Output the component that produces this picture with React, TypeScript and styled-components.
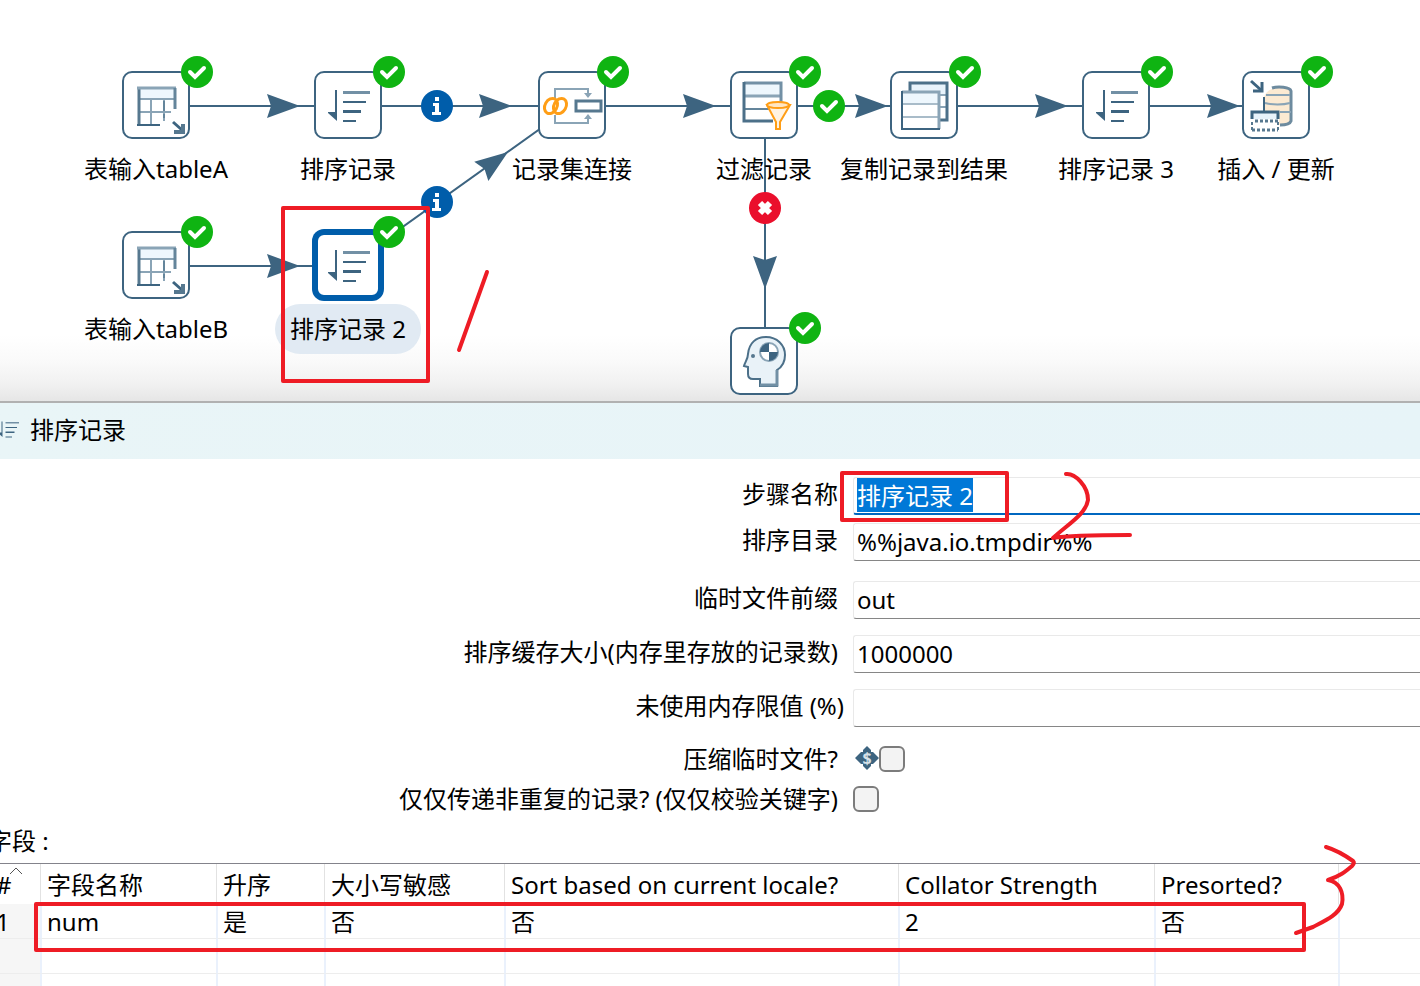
import React, { useEffect, useRef } from "react";
import styled, { createGlobalStyle, css } from "styled-components";

const INK = "#3d6480";
const SOFT = "#8aa4b6";
const ORANGE = "#ff9e16";
const MARK = "#ee1c25";

const GlobalStyle = createGlobalStyle`
  *, *::before, *::after { box-sizing: border-box; }
  body {
    margin: 0;
    background: #fff;
    color: #000;
    font-family: "Noto Sans", "Noto Sans CJK SC", sans-serif;
    font-size: 24px;
  }
  input { font: inherit; color: inherit; }
`;

const Page = styled.div`
  position: relative;
  display: flex;
  flex-direction: column;
  height: 100vh;
  overflow: hidden;
`;

/* ---------- Transformation canvas ---------- */

const Canvas = styled.main`
  position: relative;
  flex: 0 0 403px;
  overflow: hidden;
  border-bottom: 2px solid #b1b1b1;
  background: linear-gradient(#fff 335px, #fafafa 360px, #f1f1f1 384px, #e6e6e6 401px);
`;

const Hops = styled.svg`
  position: absolute;
  inset: 0;
  width: 100%;
  height: 100%;
`;

const Step = styled.div<{ $x: number; $y: number }>`
  position: absolute;
  left: ${(p) => p.$x}px;
  top: ${(p) => p.$y}px;
  width: 68px;
  display: flex;
  flex-direction: column;
  align-items: center;
`;

const StepBox = styled.div<{ $selected?: boolean }>`
  width: 68px;
  height: 68px;
  border: 2px solid ${INK};
  border-radius: 10px;
  background: #fff;
  ${(p) =>
    p.$selected &&
    css`
      border: 4px solid #005daa;
      box-shadow: 0 0 0 2px #005daa;
    `}
`;

const StepGlyph = styled.svg`
  position: absolute;
  top: 0;
  left: 0;
  width: 68px;
  height: 68px;
`;

const StepBadge = styled.svg`
  position: absolute;
  top: -15px;
  left: 59px;
  width: 32px;
  height: 32px;
`;

const StepLabel = styled.span<{ $selected?: boolean }>`
  margin-top: 5px;
  padding: 0 15px;
  border-radius: 25px;
  line-height: 50px;
  white-space: nowrap;
  background: ${(p) => (p.$selected ? "#e1eaf3" : "transparent")};
`;

type GlyphName = "table" | "sort" | "join" | "filter" | "copy" | "upsert" | "head";

const SortShape = () => (
  <g fill={INK}>
    <path d="M21 19h2v31l-9-8v-1h7z" />
    <path d="M29 20h27v3H29z" fill="#7290a5" />
    <path d="M29 30h23v2H29z" />
    <path d="M29 39h18v3H29z" />
    <path d="M29 49h13v2H29z" />
  </g>
);

const glyphs: Record<GlyphName, React.ReactNode> = {
  table: (
    <g fill="none" strokeWidth="2">
      <path d="M16 17h37v11H16z" fill="#eef7fd" />
      <path d="M29 28v26M42 28v22M16 41h33M16 28h37" stroke={SOFT} />
      <path d="M42 30v10M42 43v4" stroke="#64859b" />
      <path d="M17 55V16" stroke="#56788f" strokeWidth="3" />
      <path d="M15 17h39" stroke={SOFT} strokeWidth="3" />
      <path d="M53 17v21" stroke="#64859b" strokeWidth="3" />
      <path d="M15 54h23" stroke={INK} />
      <path d="M51 51l9 8" stroke={INK} strokeWidth="3" />
      <path d="M61 53v8h-9" stroke="#56788f" strokeWidth="4" />
    </g>
  ),
  sort: <SortShape />,
  join: (
    <g fill="none">
      <path d="M17 27v-9h33v5M17 44v8h33v-5" stroke={SOFT} strokeWidth="2" />
      <path d="M46 22h8l-4 5zM46 48h8l-4-5z" fill={SOFT} />
      <path d="M38 30h25v10H38z" stroke="#56788f" strokeWidth="3" />
      <g stroke={ORANGE} strokeWidth="3">
        <ellipse cx="13" cy="35" rx="6" ry="8" transform="rotate(30 13 35)" />
        <ellipse cx="22" cy="35" rx="6" ry="8" transform="rotate(30 22 35)" />
      </g>
    </g>
  ),
  filter: (
    <g fill="none">
      <path d="M14 13h37v12H14z" fill="#eef7fd" />
      <path d="M14 25h37" stroke={SOFT} strokeWidth="3" />
      <path d="M14 38h26" stroke="#64859b" strokeWidth="2" />
      <path d="M14 12h37v24" stroke="#7290a5" strokeWidth="3" />
      <path d="M14 11v39h29" stroke="#4c7089" strokeWidth="3" />
      <path d="M37 34l9 17v7h4v-7l10-17z" fill="#fff3e2" stroke={ORANGE} strokeWidth="2" />
      <ellipse cx="48" cy="34" rx="11" ry="3" fill="#ffe6c3" stroke={ORANGE} strokeWidth="2" />
    </g>
  ),
  copy: (
    <g fill="none">
      <path d="M20 12h37v37H20z" fill="#fff" />
      <path d="M20 13h37v10H20z" fill="#e8f3fb" />
      <path d="M48 24h9M48 36h9" stroke={SOFT} strokeWidth="2" />
      <path d="M20 22V12h37v37h-9" stroke="#4c7089" strokeWidth="3" />
      <path d="M12 21h37v37H12z" fill="#fff" />
      <path d="M12 22h37v10H12z" fill="#eef7fd" />
      <path d="M12 33h37M12 46h37" stroke="#a9bcc9" strokeWidth="2" />
      <path d="M12 21h37v37" stroke={SOFT} strokeWidth="3" />
      <path d="M12 20v38h38" stroke={INK} strokeWidth="2" />
    </g>
  ),
  upsert: (
    <g fill="none">
      <path d="M22 26c3-8 10-9 14-9 8 0 14 2 14 4v28c0 3-5 4-13 5V40H22z" fill="#fcead2" />
      <path d="M30 17c6-2 18-1 19 3v30c-1 3-7 4-11 4" stroke="#6d8b9f" strokeWidth="3" />
      <path d="M24 24h24M23 32c7 2 18 2 25 0M38 41h11" stroke={SOFT} strokeWidth="2" />
      <path d="M22 26v14" stroke={INK} strokeWidth="2" />
      <path d="M9 10l10 9" stroke={INK} strokeWidth="3" />
      <path d="M20 11v9h-9" stroke={INK} strokeWidth="3" />
      <path d="M9 41h28v19H9z" fill="#fff" />
      <path d="M10 42h26v6H10z" fill="#e8f3fb" />
      <path d="M10 48v-7h26v7" stroke={INK} strokeWidth="3" />
      <path d="M13 50h23M10 59h26" stroke="#56788f" strokeWidth="3" strokeDasharray="3 2" />
      <path d="M10 51v9M36 51v9" stroke="#56788f" strokeWidth="2" strokeDasharray="3 2" />
    </g>
  ),
  head: (
    <g>
      <path
        d="M30 59V52H23c-4 0-5-2-5-5v-7l-4-1c1-4 4-7 4-12C19 16 26 10 36 10c11 0 19 8 19 18 0 7-3 12-8 15v16z"
        fill="#e9f2f8"
        stroke="#4c7089"
        strokeWidth="2"
      />
      <path d="M30 58h17V43" fill="none" stroke="#7290a5" strokeWidth="3" />
      <circle cx="39" cy="25" r="9" fill="#fff" stroke={SOFT} strokeWidth="2" />
      <path d="M39 25v-9a9 9 0 0 0-9 9zM39 25v9a9 9 0 0 0 9-9z" fill={INK} />
      <circle cx="23" cy="29" r="2" fill="#56788f" />
    </g>
  ),
};

const CheckShape = () => (
  <>
    <circle cx="16" cy="16" r="16" fill="#0fb412" />
    <path d="M9 16l5 5 9-9" fill="none" stroke="#fff" strokeWidth="4" strokeLinecap="round" />
  </>
);

type StepData = { id: string; label?: string; x: number; y: number; glyph: GlyphName; selected?: boolean };

const steps: StepData[] = [
  { id: "a", label: "表输入tableA", x: 122, y: 71, glyph: "table" },
  { id: "s1", label: "排序记录", x: 314, y: 71, glyph: "sort" },
  { id: "j", label: "记录集连接", x: 538, y: 71, glyph: "join" },
  { id: "f", label: "过滤记录", x: 730, y: 71, glyph: "filter" },
  { id: "c", label: "复制记录到结果", x: 890, y: 71, glyph: "copy" },
  { id: "s3", label: "排序记录 3", x: 1082, y: 71, glyph: "sort" },
  { id: "u", label: "插入 / 更新", x: 1242, y: 71, glyph: "upsert" },
  { id: "b", label: "表输入tableB", x: 122, y: 231, glyph: "table" },
  { id: "s2", label: "排序记录 2", x: 314, y: 231, glyph: "sort", selected: true },
  { id: "h", x: 730, y: 327, glyph: "head" },
];

const heads = [
  [300, 106, 0],
  [512, 106, 0],
  [716, 106, 0],
  [888, 106, 0],
  [1068, 106, 0],
  [1240, 106, 0],
  [300, 266, 0],
  [508, 152, -36],
  [765, 289, 90],
];

const InfoMark = ({ x, y }: { x: number; y: number }) => (
  <g transform={`translate(${x} ${y})`}>
    <circle r="16" fill="#005daa" />
    <path d="M-2-9h4v4h-4zM-4-3h6v9h2v3H-5V6h3V0h-2z" fill="#fff" />
  </g>
);

const Flow = () => (
  <Canvas>
    <Hops aria-hidden="true">
      <path
        d="M190 106H538M190 266H314M572 106H1242M348 266L572 106M765 139V327"
        fill="none"
        stroke={INK}
        strokeWidth="2"
      />
      {heads.map(([x, y, r]) => (
        <path
          key={`${x}-${y}`}
          d="M0 0L-33-12L-29 0L-33 12Z"
          fill={INK}
          transform={`translate(${x} ${y}) rotate(${r})`}
        />
      ))}
      <InfoMark x={437} y={106} />
      <InfoMark x={437} y={202} />
      <g transform="translate(813 90)">
        <CheckShape />
      </g>
      <g transform="translate(765 208)">
        <circle r="16" fill="#ea0f2c" />
        <path d="M-5-5L5 5M5-5L-5 5" stroke="#fff" strokeWidth="6" />
      </g>
    </Hops>
    {steps.map((s) => (
      <Step key={s.id} $x={s.x} $y={s.y}>
        <StepBox $selected={s.selected} />
        <StepGlyph viewBox="0 0 68 68" aria-hidden="true">
          {glyphs[s.glyph]}
        </StepGlyph>
        <StepBadge viewBox="0 0 32 32" aria-hidden="true">
          <CheckShape />
        </StepBadge>
        {s.label && <StepLabel $selected={s.selected}>{s.label}</StepLabel>}
      </Step>
    ))}
  </Canvas>
);

/* ---------- Step dialog ---------- */

const Dialog = styled.section`
  flex: 1;
  min-height: 0;
  margin-left: -12px;
  overflow: hidden;
  background: #fff;
`;

const TitleBar = styled.header`
  display: flex;
  align-items: center;
  gap: 10px;
  height: 56px;
  padding: 0 0 2px 10px;
  background: linear-gradient(90deg, #e9f5f7, #e7f4f8);
`;

const TitleGlyph = styled.svg`
  width: 22px;
  height: 18px;
`;

const Title = styled.h1`
  margin: 0;
  font-size: 24px;
  font-weight: 400;
  line-height: 54px;
`;

const Form = styled.form`
  padding: 18px 0 6px 12px;
`;

const Row = styled.div<{ $gap?: number }>`
  display: grid;
  grid-template-columns: 3fr 2fr;
  margin-top: ${(p) => p.$gap ?? 0}px;
`;

const Label = styled.label<{ $close?: boolean; $short?: boolean }>`
  padding-right: ${(p) => (p.$close ? 8 : 14)}px;
  line-height: ${(p) => (p.$short ? 26 : 34)}px;
  text-align: right;
  white-space: nowrap;
`;

const TextField = styled.input<{ $active?: boolean }>`
  height: 38px;
  margin-left: 1px;
  padding: 0 3px 2px;
  border: 1px solid #e9e9e9;
  border-right: 0;
  border-bottom: ${(p) => (p.$active ? "2px solid #0067c0" : "1px solid #868686")};
  border-radius: 3px 0 0 3px;
  outline: none;
  background: #fff;
  min-width: 0;

  &::selection {
    background: #0078d7;
    color: #fff;
  }
`;

const CheckCell = styled.div`
  display: flex;
  align-items: center;
  height: 26px;
  margin-left: 1px;
`;

const CheckBox = styled.input`
  appearance: none;
  width: 26px;
  height: 26px;
  margin: 0;
  border: 2px solid #7c7c7c;
  border-radius: 6px;
  background: #f3f3f3;
`;

const VariableGlyph = styled.svg`
  width: 24px;
  height: 24px;
  margin: 0 0 3px 2px;
`;

const TableTitle = styled.h2`
  margin: 0;
  font-size: 24px;
  font-weight: 400;
  line-height: 45px;
`;

const Grid = styled.table`
  width: 100%;
  table-layout: fixed;
  border-collapse: separate;
  border-spacing: 0;
  border-top: 1px solid #83838b;
`;

const HeadCell = styled.th`
  position: relative;
  height: 40px;
  padding: 2px 6px 0;
  border-right: 1px solid #e2e2e2;
  font-weight: 400;
  line-height: 36px;
  text-align: left;
  white-space: nowrap;

  &:first-child { padding-left: 8px; }
  &:last-child { border-right: 0; }
`;

const SortCaret = styled.svg`
  position: absolute;
  top: 3px;
  left: 21px;
  width: 14px;
  height: 8px;
`;

const Cell = styled.td`
  height: 35px;
  padding: 2px 5px 0;
  border-left: 1px solid #eaf1fc;
  border-right: 1px solid #eaf1fc;
  border-bottom: 1px solid #ededed;
  line-height: 32px;

  &:first-child {
    padding-left: 8px;
    border-left: 0;
    background: #f6f6f6;
  }
  &:last-child { border-right: 0; }
`;

const columns = [
  { name: "#", width: 53 },
  { name: "字段名称", width: 176 },
  { name: "升序", width: 108 },
  { name: "大小写敏感", width: 180 },
  { name: "Sort based on current locale?", width: 394 },
  { name: "Collator Strength", width: 256 },
  { name: "Presorted?", width: 184 },
  { name: "", width: 0 },
];

const rows = [["1", "num", "是", "否", "否", "2", "否", ""], Array(8).fill(""), Array(8).fill("")];

const SortDialog = () => {
  const nameField = useRef<HTMLInputElement>(null);

  useEffect(() => {
    nameField.current?.focus();
    nameField.current?.select();
  }, []);

  return (
    <Dialog aria-labelledby="dialog-title">
      <TitleBar>
        <TitleGlyph viewBox="14 18 44 36" aria-hidden="true">
          <SortShape />
        </TitleGlyph>
        <Title id="dialog-title">排序记录</Title>
      </TitleBar>
      <Form>
        <Row>
          <Label htmlFor="step-name">步骤名称</Label>
          <TextField id="step-name" ref={nameField} $active defaultValue="排序记录 2" />
        </Row>
        <Row $gap={8}>
          <Label htmlFor="sort-dir">排序目录</Label>
          <TextField id="sort-dir" defaultValue="%%java.io.tmpdir%%" />
        </Row>
        <Row $gap={20}>
          <Label htmlFor="prefix">临时文件前缀</Label>
          <TextField id="prefix" defaultValue="out" />
        </Row>
        <Row $gap={16}>
          <Label htmlFor="cache">排序缓存大小(内存里存放的记录数)</Label>
          <TextField id="cache" defaultValue="1000000" />
        </Row>
        <Row $gap={16}>
          <Label htmlFor="free-memory" $close>
            未使用内存限值 (%)
          </Label>
          <TextField id="free-memory" />
        </Row>
        <Row $gap={19}>
          <Label htmlFor="compress" $short>
            压缩临时文件?
          </Label>
          <CheckCell>
            <VariableGlyph viewBox="0 0 24 24" aria-hidden="true">
              <path d="M12 0l4 4v2h2l6 6-6 6h-2v2l-4 4-4-4v-2H6l-6-6 6-6h2V4z" fill={INK} />
              <text x="12" y="18" fill="#d5e0e8" fontSize="16" fontWeight="700" textAnchor="middle">
                $
              </text>
            </VariableGlyph>
            <CheckBox type="checkbox" id="compress" />
          </CheckCell>
        </Row>
        <Row $gap={14}>
          <Label htmlFor="unique" $short>
            仅仅传递非重复的记录? (仅仅校验关键字)
          </Label>
          <CheckCell>
            <CheckBox type="checkbox" id="unique" />
          </CheckCell>
        </Row>
      </Form>
      <TableTitle>字段 :</TableTitle>
      <Grid>
        <colgroup>
          {columns.map((c) => (
            <col key={c.name} width={c.width || undefined} />
          ))}
        </colgroup>
        <thead>
          <tr>
            {columns.map((c, i) => (
              <HeadCell key={c.name} scope="col">
                {c.name}
                {i === 0 && (
                  <SortCaret viewBox="0 0 14 8" aria-hidden="true">
                    <path d="M1 7l6-6 6 6" fill="none" stroke="#555" />
                  </SortCaret>
                )}
              </HeadCell>
            ))}
          </tr>
        </thead>
        <tbody>
          {rows.map((r, i) => (
            <tr key={i}>
              {r.map((value, j) => (
                <Cell key={j}>{value}</Cell>
              ))}
            </tr>
          ))}
        </tbody>
      </Grid>
    </Dialog>
  );
};

/* ---------- Hand-drawn notes over the window ---------- */

const Notes = styled.svg`
  position: absolute;
  inset: 0;
  width: 100%;
  height: 100%;
  pointer-events: none;
`;

const App = () => (
  <>
    <GlobalStyle />
    <Page>
      <Flow />
      <SortDialog />
      <Notes
        aria-hidden="true"
        fill="none"
        stroke={MARK}
        strokeWidth="4"
        strokeLinecap="round"
        strokeLinejoin="round"
      >
        <path d="M283 208H428V381H283Z" />
        <path d="M487 272L459 350" />
        <path d="M842 473H1007V520H842Z" />
        <path d="M1066 474C1075 473 1088 486 1088 500C1086 514 1068 524 1053 538C1070 535 1100 535 1130 535" />
        <path d="M36 904H1304V950H36Z" />
        <path d="M1326 847C1336 850 1346 856 1353 861Q1355 863 1352 866C1345 872 1340 876 1328 880C1340 882 1344 893 1342 904C1338 916 1322 922 1313 927L1296 933" />
      </Notes>
    </Page>
  </>
);

export default App;
